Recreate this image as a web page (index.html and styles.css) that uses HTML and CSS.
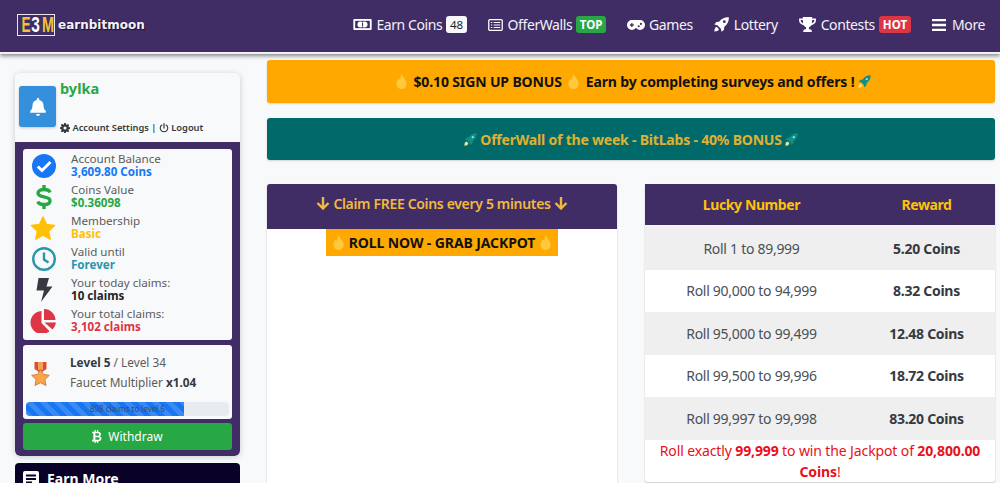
FILE: index.html
```html
<!DOCTYPE html>
<html lang="en">
<head>
<meta charset="utf-8">
<title>earnbitmoon</title>
<link rel="stylesheet" href="styles.css">
</head>
<body>
<svg class="defs" width="0" height="0" aria-hidden="true">
  <symbol id="drop" viewBox="0 0 12 16"><path d="M6.300 0C6.800 3 11.500 6 11.500 10.400 11.500 13.600 9 16 6 16S.5 13.600.5 10.400C.5 7.600 2.200 6.200 3.200 4.600 3.600 5.600 4 6 4.600 6.400 4.800 4 5.200 1.600 6.300 0Z" fill="#ffc83d"/></symbol>
  <symbol id="rocket" viewBox="0 0 16 16"><path d="M15.600.4C11.600.2 8.200 2 5.900 5.400L3 5.700.8 8.200l3 .6 3.400 3.400.6 3 2.500-2.200.3-2.900C14 7.800 15.800 4.400 15.600.4Z" fill="#0f8f86"/><circle cx="10.800" cy="5.200" r="1.400" fill="#9fd8e8"/><path d="M3.400 10.600 1 11.800l-.6 3.800 3.800-.6 1.200-2.400Z" fill="#f7e08a"/></symbol>
  <symbol id="down" viewBox="0 0 14 14"><path d="M7 1v11M1.500 7 7 12.500 12.500 7" fill="none" stroke="#f0b93e" stroke-width="2.400"/></symbol>
</svg>

<header class="topbar">
  <a class="brand">
    <span class="logo"><span class="logo-e">E</span><span class="logo-3">3</span><span class="logo-m">M</span></span>
    <span class="brand-name">earnbitmoon</span>
  </a>
  <nav class="nav">
    <a class="nav-item">
      <svg class="nav-icon money" viewBox="0 0 20 12"><rect width="20" height="12" rx="1" fill="#fff"/><rect x="2" y="2" width="16" height="8" fill="#402d66"/><circle cx="7.800" cy="6" r="3.300" fill="#fff"/><circle cx="12.200" cy="6" r="3.300" fill="#fff"/><path d="M10 3.800v4.400" stroke="#402d66" stroke-width="1.200"/></svg>
      Earn Coins <span class="badge badge-light">48</span>
    </a>
    <a class="nav-item">
      <svg class="nav-icon list" viewBox="0 0 16 13"><rect x=".7" y=".7" width="14.600" height="11.600" rx="1.200" fill="none" stroke="#fff" stroke-width="1.400"/><path d="M3 3.800h1.500M6 3.800h7M3 6.500h1.500M6 6.500h7M3 9.200h1.500M6 9.200h7" stroke="#fff" stroke-width="1.200"/></svg>
      OfferWalls <span class="badge badge-green">TOP</span>
    </a>
    <a class="nav-item">
      <svg class="nav-icon pad" viewBox="0 0 20 11"><path fill="#fff" d="M5.500 0h9a5.500 5.500 0 0 1 0 11c-1.500 0-2.800-.7-3.700-1.800H9.200C8.300 10.300 7 11 5.500 11a5.500 5.500 0 0 1 0-11Z"/><path d="M3.300 5.500h4.200M5.400 3.400v4.200" stroke="#402d66" stroke-width="1.400"/><circle cx="13" cy="6.900" r="1.200" fill="#402d66"/><circle cx="15.500" cy="4.300" r="1.200" fill="#402d66"/></svg>
      Games
    </a>
    <a class="nav-item">
      <svg class="nav-icon rocket-nav" viewBox="0 0 16 16"><path fill="#fff" d="M15.800.2C11.800-.2 8 1.500 5.500 5L2.500 5.300.3 8l3.300.7 3.700 3.700.7 3.300 2.700-2.200.3-3c3.500-2.500 5.200-6.500 4.800-10.500ZM11 6.500a1.500 1.500 0 1 1 0-3 1.500 1.500 0 0 1 0 3Z"/><path fill="#fff" d="M2.800 10.500c-1.500.5-2.300 2.500-2.500 5 2.500-.2 4.500-1 5-2.500Z"/></svg>
      Lottery
    </a>
    <a class="nav-item">
      <svg class="nav-icon trophy" viewBox="0 0 18 16"><path fill="#fff" d="M4 0h10v1.500h4v2.300c0 2.500-2.200 4.500-4.900 4.900-.8 1.200-1.600 1.800-2.600 2.100v2.200h2V14.500H5.500V13h2v-2.200c-1-.3-1.800-.9-2.600-2.100C2.200 8.300 0 6.300 0 3.800V1.500h4V0Zm-2.200 3.200v.6c0 1.300 1 2.500 2.500 3-.2-1-.3-2.200-.3-3.600H1.800Zm14.400 0H14c0 1.400-.1 2.600-.3 3.600 1.500-.5 2.500-1.700 2.500-3v-.6Z"/><rect x="4.500" y="14" width="9" height="2" fill="#fff"/></svg>
      Contests <span class="badge badge-red">HOT</span>
    </a>
    <a class="nav-item">
      <svg class="nav-icon bars" viewBox="0 0 14 12"><path d="M0 1.200h14M0 6h14M0 10.800h14" stroke="#fff" stroke-width="2.300"/></svg>
      More
    </a>
  </nav>
</header>

<div class="page">
  <aside class="sidebar">
    <section class="account-card">
      <div class="user-head">
        <div class="bell-box">
          <svg viewBox="0 0 16 18" class="bell"><path fill="#fff" d="M8 0c.7 0 1.200.5 1.200 1.200v.7c2.600.5 4.300 2.700 4.300 5.300 0 3.200 1 4.600 2 5.600.3.300.5.600.5 1 0 .5-.4 1-1 1H1c-.6 0-1-.5-1-1 0-.4.200-.7.500-1 1-1 2-2.400 2-5.600 0-2.600 1.700-4.800 4.300-5.300v-.7C6.800.5 7.300 0 8 0ZM6 16h4c0 1.100-.9 2-2 2s-2-.9-2-2Z"/></svg>
        </div>
        <div class="user-text">
          <div class="username">bylka</div>
          <div class="user-links"><svg class="mini" viewBox="0 0 16 16"><path fill="#343a40" d="M6.700 0h2.600l.4 2.200 1.300.6 1.900-1.300 1.800 1.800-1.300 1.900.6 1.300 2.200.4v2.600l-2.200.4-.6 1.300 1.300 1.900-1.800 1.800-1.900-1.300-1.300.6-.4 2.200H6.700l-.4-2.200-1.300-.6-1.900 1.300-1.800-1.800 1.300-1.900-.6-1.300L-.2 9.300V6.700L2 6.300l.6-1.300-1.300-1.900L3.100 1.300 5 2.600l1.300-.6L6.700 0ZM8 5.500a2.500 2.500 0 1 0 0 5 2.500 2.500 0 0 0 0-5Z"/></svg> Account Settings | <svg class="mini" viewBox="0 0 16 16"><path d="M8 1v7" stroke="#343a40" stroke-width="2" stroke-linecap="round"/><path d="M4.500 3.200a6 6 0 1 0 7 0" fill="none" stroke="#343a40" stroke-width="1.800" stroke-linecap="round"/></svg> Logout</div>
        </div>
      </div>
      <div class="account-body">
        <div class="stats">
          <div class="stat">
            <svg class="stat-icon" viewBox="0 0 24 24"><circle cx="12" cy="12" r="12" fill="#1676f3"/><path d="M5.800 12.500 10 16.500 18.500 8" fill="none" stroke="#fff" stroke-width="3"/></svg>
            <div class="stat-text"><span>Account Balance</span><b class="c-blue">3,609.80 Coins</b></div>
          </div>
          <div class="stat">
            <svg class="stat-icon" viewBox="0 0 24 24"><path fill="none" stroke="#28a745" stroke-width="3.400" d="M18 7.500c-.5-2-2.500-3-6-3-3.500 0-6 1.200-6 3.700 0 5 12 2.500 12 7.500 0 2.500-2.500 3.800-6 3.800s-5.500-1-6-3"/><path d="M12 0v24" stroke="#28a745" stroke-width="3.400" stroke-dasharray="5 14 5"/></svg>
            <div class="stat-text"><span>Coins Value</span><b class="c-green">$0.36098</b></div>
          </div>
          <div class="stat">
            <svg class="stat-icon star" viewBox="0 0 26 25"><path fill="#ffc107" stroke="#ffc107" stroke-width="1.500" stroke-linejoin="round" d="M13 1l3.700 7.900 8.300 1-6.200 5.900 1.700 8.400L13 20l-7.500 4.200 1.700-8.400L1 9.900l8.300-1Z"/></svg>
            <div class="stat-text"><span>Membership</span><b class="c-yellow">Basic</b></div>
          </div>
          <div class="stat">
            <svg class="stat-icon" viewBox="0 0 24 24"><circle cx="12" cy="12" r="10.800" fill="none" stroke="#2b95ab" stroke-width="2.400"/><path d="M12 5.500v7l4.500 3" fill="none" stroke="#2b95ab" stroke-width="2.400"/></svg>
            <div class="stat-text"><span>Valid until</span><b class="c-teal">Forever</b></div>
          </div>
          <div class="stat">
            <svg class="stat-icon" viewBox="0 0 24 24"><path fill="#343a40" d="M6.500 0h10.500l-2.500 8.500h6L9 24l3-11.500H4.500Z"/></svg>
            <div class="stat-text"><span>Your today claims:</span><b class="c-dark">10 claims</b></div>
          </div>
          <div class="stat">
            <svg class="stat-icon pie" viewBox="0 0 26 24"><path fill="#dc3545" d="M11 2v12l8 8.200A11.500 11.500 0 1 1 11 2Z"/><path fill="#dc3545" d="M13.500 0A11.500 11.500 0 0 1 25 11H13.500Z"/><path fill="#dc3545" d="M14 13.500h11.500a11.500 11.500 0 0 1-3.500 7Z"/></svg>
            <div class="stat-text"><span>Your total claims:</span><b class="c-red">3,102 claims</b></div>
          </div>
        </div>
        <div class="level-box">
          <div class="level-main">
            <svg class="medal" viewBox="0 0 20 26"><path fill="#d9512c" d="M4 0h12v7l-6 4-6-4Z"/><path fill="#f2a25c" d="M7.500 0h5v8h-5Z"/><path fill="#f9a54a" stroke="#c9702e" stroke-width=".8" stroke-linejoin="round" d="M10 7l2.800 5.400 6 .9-4.400 4.200 1.100 6L10 20.700l-5.500 2.800 1.100-6-4.400-4.200 6-.9Z"/></svg>
            <div class="level-text">
              <div><b>Level 5</b> / Level 34</div>
              <div>Faucet Multiplier <b>x1.04</b></div>
            </div>
          </div>
          <div class="progress"><div class="progress-bar" style="width:78%"></div><span class="progress-label">898 claims to level 6</span></div>
        </div>
        <a class="withdraw">
          <svg class="btc" viewBox="0 0 12 16"><path fill="#fff" d="M3 0h1.500v2H6V0h1.500v2.100c2 .3 3.300 1.400 3.300 3.200 0 1-.5 1.900-1.400 2.400 1.400.5 2.100 1.500 2.100 2.800 0 2-1.500 3.200-4 3.400V16H6v-2H4.500v2H3v-2H0v-2h1.500V4H0V2h3V0Zm1 4v3h3c1 0 1.500-.6 1.500-1.500S8 4 7 4H4Zm0 5v3h3.500c1 0 1.700-.6 1.700-1.500S8.500 9 7.500 9H4Z"/></svg>
          Withdraw
        </a>
      </div>
    </section>
    <section class="earn-more">
      <svg class="doc" viewBox="0 0 16 16"><rect width="16" height="16" rx="2" fill="#fff"/><path d="M3 4.500h10M3 8h10M3 11.500h6" stroke="#0a0128" stroke-width="2"/></svg>
      Earn More
    </section>
  </aside>

  <main class="content">
    <div class="alert alert-amber"><svg class="emoji drop-gap"><use href="#drop"/></svg> $0.10 SIGN UP BONUS <svg class="emoji drop-gap"><use href="#drop"/></svg> Earn by completing surveys and offers ! <svg class="emoji"><use href="#rocket"/></svg></div>
    <div class="alert alert-teal"><svg class="emoji"><use href="#rocket"/></svg> OfferWall of the week - BitLabs - 40% BONUS <svg class="emoji"><use href="#rocket"/></svg></div>
    <div class="columns">
      <section class="roll-card">
        <div class="roll-head">
          <svg class="arrow"><use href="#down"/></svg>
          Claim FREE Coins every 5 minutes
          <svg class="arrow"><use href="#down"/></svg>
        </div>
        <div class="roll-body">
          <div class="jackpot"><svg class="emoji"><use href="#drop"/></svg> ROLL NOW - GRAB JACKPOT <svg class="emoji"><use href="#drop"/></svg></div>
        </div>
      </section>
      <section class="lucky-card">
        <table class="lucky">
          <thead><tr><th>Lucky Number</th><th>Reward</th></tr></thead>
          <tbody>
            <tr><td>Roll 1 to 89,999</td><td><b>5.20 Coins</b></td></tr>
            <tr><td>Roll 90,000 to 94,999</td><td><b>8.32 Coins</b></td></tr>
            <tr><td>Roll 95,000 to 99,499</td><td><b>12.48 Coins</b></td></tr>
            <tr><td>Roll 99,500 to 99,996</td><td><b>18.72 Coins</b></td></tr>
            <tr><td>Roll 99,997 to 99,998</td><td><b>83.20 Coins</b></td></tr>
          </tbody>
        </table>
        <p class="jackpot-note">Roll exactly <b>99,999</b> to win the Jackpot of <b>20,800.00 Coins</b>!</p>
      </section>
    </div>
  </main>
</div>
</body>
</html>
```

FILE: styles.css
```css
* { box-sizing: border-box; }
html, body { height: 483px; overflow: hidden; }
body {
  margin: 0;
  background: #f8f9fa;
  font-family: "Noto Sans", "Open Sans", sans-serif;
  color: #212529;
}
.defs { position: absolute; }
.topbar {
  height: 54px;
  background: #402d66;
  border-bottom: 2px solid #f1eef5;
  box-shadow: 0 2px 4px rgba(0,0,0,.45);
  display: flex;
  align-items: center;
  justify-content: space-between;
  padding: 0 15px 3px 17px;
}
.brand { display: flex; align-items: center; gap: 3px; padding-top: 1px; }
.logo {
  display: flex;
  align-items: center;
  width: 38px;
  height: 22px;
  border: 1px solid #e9e4f2;
  padding-left: 2px;
  gap: 2px;
  font: 700 22px/20px "Liberation Sans", sans-serif;
}
.logo span { display: block; text-align: center; }
.logo-e { width: 8px; color: #f1c232; transform: scaleX(.62); }
.logo-3 { width: 8px; color: #fff; transform: scaleX(.7); }
.logo-m { width: 12px; color: #f1c232; transform: scaleX(.66); }
.brand-name {
  color: #f4f2f8;
  font: 700 12px/1 "DejaVu Sans", sans-serif;
  text-shadow: 1px 1px 1px #15102a;
}
.nav { display: flex; align-items: center; gap: 21px; }
.nav-item { display: flex; align-items: center; gap: 4px; color: #f4f2f8; font-size: 14px; letter-spacing: -.4px; white-space: nowrap; }
.nav-icon { flex: none; }
.money { width: 19px; height: 11px; }
.list { width: 15px; height: 12px; margin-right: 1px; }
.pad { width: 18px; height: 10px; }
.rocket-nav { width: 15px; height: 15px; margin-right: 1px; }
.trophy { width: 17px; height: 15px; margin-right: 1px; }
.bars { width: 14px; height: 12px; margin-right: 2px; }
.badge {
  font-size: 11.500px;
  font-weight: 700;
  line-height: 13px;
  padding: 2px 4px;
  border-radius: 3px;
  letter-spacing: 0;
}
.badge-light { background: #f8f9fa; color: #212529; font-weight: 400; padding: 2px 3.500px; }
.badge-green { background: #28a745; color: #fff; padding: 2px 3.500px; }
.badge-red { background: #dc3545; color: #fff; }

.page { display: flex; align-items: flex-start; padding-left: 15px; }
.sidebar { width: 225px; flex: none; margin-top: 19px; margin-right: 27px; }
.account-card {
  background: #f8f9fa;
  border-radius: 5px;
  box-shadow: 0 1px 6px rgba(0,0,0,.18);
  overflow: hidden;
}
.user-head { display: flex; height: 69px; padding: 0 4px; }
.bell-box {
  width: 37px;
  height: 41px;
  flex: none;
  margin-top: 13px;
  border-radius: 3px;
  background: #3490dc;
  display: flex;
  align-items: center;
  justify-content: center;
  box-shadow: 0 1px 3px rgba(0,0,0,.2);
}
.bell { width: 16px; height: 18px; }
.user-text { margin-left: 4px; display: flex; flex-direction: column; justify-content: space-between; padding: 5px 0 7px; }
.username { color: #28a745; font-weight: 700; font-size: 14.500px; line-height: 20px; }
.user-links { font-size: 9.300px; font-weight: 600; color: #343a40; line-height: 14px; white-space: nowrap; }
.mini { width: 10px; height: 10px; vertical-align: -1.500px; }
.account-body { background: #402d66; padding: 7px 8px 6px; border-radius: 0 0 5px 5px; }
.stats { background: #f8f9fa; border-radius: 3px; padding: 1px 4px 0; height: 191px; }
.stat { display: flex; align-items: center; height: 31px; }
.stat-icon { width: 24px; height: 24px; margin-left: 5px; margin-right: 15px; flex: none; }
.stat-icon.star { width: 26px; margin-left: 3px; margin-right: 15px; }
.stat-icon.pie { width: 27px; margin-left: 3px; margin-right: 14px; }
.stat-text { display: flex; flex-direction: column; font-size: 11.600px; line-height: 12.800px; color: #5c5c5c; }
.stat-text b { font-weight: 700; }
.c-blue { color: #1676f3; }
.c-green { color: #28a745; }
.c-yellow { color: #ffc107; }
.c-teal { color: #2b95ab; }
.c-dark { color: #212529; }
.c-red { color: #dc3545; }
.level-box { margin-top: 5px; height: 74px; background: #f8f9fa; border-radius: 3px; padding: 0 3px; }
.level-main { display: flex; align-items: center; height: 52px; margin-bottom: 5px; padding-top: 1px; }
.medal { width: 21px; height: 26px; margin: 7px 19px 0 4px; }
.level-text { font-size: 11.800px; line-height: 20px; color: #5c5c5c; }
.level-text b { color: #343a40; }
.progress { position: relative; height: 14px; background: #e9ecef; border-radius: 4px; overflow: hidden; }
.progress-bar {
  height: 100%;
  background-color: #1676f3;
  background-image: linear-gradient(45deg, rgba(255,255,255,.15) 25%, transparent 25%, transparent 50%, rgba(255,255,255,.15) 50%, rgba(255,255,255,.15) 75%, transparent 75%, transparent);
  background-size: 14px 14px;
}
.progress-label { position: absolute; inset: 0; text-align: center; font-size: 8px; line-height: 14px; color: #3b4a6b; }
.withdraw {
  margin-top: 4px;
  height: 27px;
  background: #28a745;
  border-radius: 3px;
  color: #fff;
  font-size: 12px;
  display: flex;
  align-items: center;
  justify-content: center;
  gap: 6px;
}
.btc { width: 10px; height: 13px; }
.earn-more {
  margin-top: 7px;
  height: 40px;
  background: #0a0128;
  border-radius: 4px 4px 0 0;
  color: #fff;
  font-weight: 700;
  font-size: 14px;
  padding: 7px 8px;
  display: flex;
  align-items: flex-start;
  gap: 8px;
  line-height: 18px;
}
.doc { width: 16px; height: 16px; flex: none; margin-top: 1px; }

.content { width: 728px; flex: none; padding-top: 6px; }
.alert {
  height: 43px;
  line-height: 43px;
  text-align: center;
  border-radius: 3px;
  font-weight: 700;
  font-size: 14px;
  white-space: nowrap;
  box-shadow: 0 1px 2px rgba(0,0,0,.15);
}
.alert-amber { background: #ffa800; color: #111; letter-spacing: -.14px; padding-left: 2px; }
.drop-gap { margin: 0 2px; }
.alert-teal { margin-top: 15px; background: #006a6a; color: #e0b030; height: 42px; line-height: 44px; letter-spacing: -.2px; }
.emoji { width: 13px; height: 15px; vertical-align: -2px; }
.columns { display: flex; justify-content: space-between; margin-top: 24px; }
.roll-card { width: 350px; height: 310px; background: #fff; border-radius: 3px; box-shadow: 0 1px 2px rgba(0,0,0,.2); }
.roll-head {
  height: 45px;
  padding-bottom: 7px;
  background: #402d66;
  border-radius: 3px 3px 0 0;
  color: #f0b93e;
  font-weight: 600;
  font-size: 14px;
  letter-spacing: -.33px;
  display: flex;
  align-items: center;
  justify-content: center;
  gap: 3px;
}
.arrow { width: 14px; height: 14px; }
.roll-body { display: flex; justify-content: center; }
.jackpot { width: 232px; height: 27px; line-height: 27px; background: #ffa800; color: #111; font-weight: 700; font-size: 14px; letter-spacing: -.1px; text-align: center; white-space: nowrap; }
.lucky-card { width: 350px; height: 298px; background: #fff; border-radius: 3px; box-shadow: 0 1px 2px rgba(0,0,0,.2); }
.lucky { width: 100%; border-collapse: separate; border-spacing: 0; table-layout: fixed; font-size: 14px; letter-spacing: -.28px; }
.lucky th { height: 43px; background: #402d66; color: #ffc107; font-weight: 700; letter-spacing: -.4px; border-bottom: 2px solid #f4f4f4; }
.lucky th:first-child, .lucky td:first-child { width: 213px; }
.lucky td { height: 42.500px; text-align: center; color: #495057; padding: 0; }
.lucky td b { color: #343a40; }
.lucky tbody tr:nth-child(odd) td { background: #efefef; }
.jackpot-note { margin: 0; padding: 0 5px; text-align: center; color: #e8101a; font-size: 14px; line-height: 21px; letter-spacing: -.12px; }
```
